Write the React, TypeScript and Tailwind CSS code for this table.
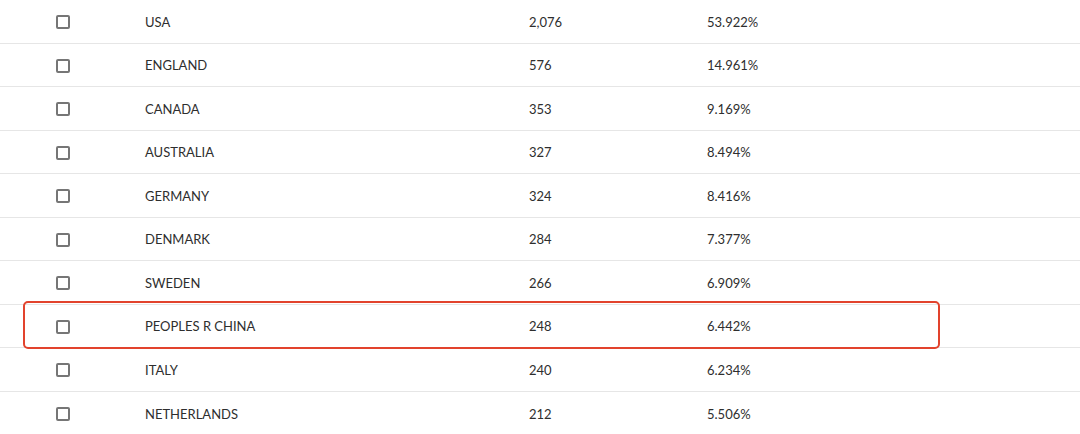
const rows = [
  { country: "USA", count: "2,076", pct: "53.922%" },
  { country: "ENGLAND", count: "576", pct: "14.961%" },
  { country: "CANADA", count: "353", pct: "9.169%" },
  { country: "AUSTRALIA", count: "327", pct: "8.494%" },
  { country: "GERMANY", count: "324", pct: "8.416%" },
  { country: "DENMARK", count: "284", pct: "7.377%" },
  { country: "SWEDEN", count: "266", pct: "6.909%" },
  { country: "PEOPLES R CHINA", count: "248", pct: "6.442%", highlight: true },
  { country: "ITALY", count: "240", pct: "6.234%" },
  { country: "NETHERLANDS", count: "212", pct: "5.506%" },
];

export default function App() {
  return (
    <div
      className="w-[1080px] h-[434px] overflow-hidden bg-white text-[#2e2e2e] text-[13px]"
      style={{ fontFamily: "Lato, 'Liberation Sans', sans-serif" }}
    >
      <div className="flex flex-col">
        {rows.map((r, i) => (
          <div
            key={r.country}
            className={`relative flex items-center h-[43.5px] pt-[2px] shrink-0 ${
              i < rows.length - 1 ? "border-b border-[#e6e6e6]" : ""
            }`}
          >
            <div className="w-[145px] pl-[56px] flex items-center">
              <span className="block w-[14px] h-[14px] border-2 border-[#767676] rounded-[2px]" />
            </div>
            <div className="w-[384px]">{r.country}</div>
            <div className="w-[178px]">{r.count}</div>
            <div>{r.pct}</div>
            {r.highlight && (
              <div className="absolute left-[23px] w-[917px] top-[-4px] bottom-[-2px] border-2 border-[#e2432d] rounded-[5px]" />
            )}
          </div>
        ))}
      </div>
    </div>
  );
}
